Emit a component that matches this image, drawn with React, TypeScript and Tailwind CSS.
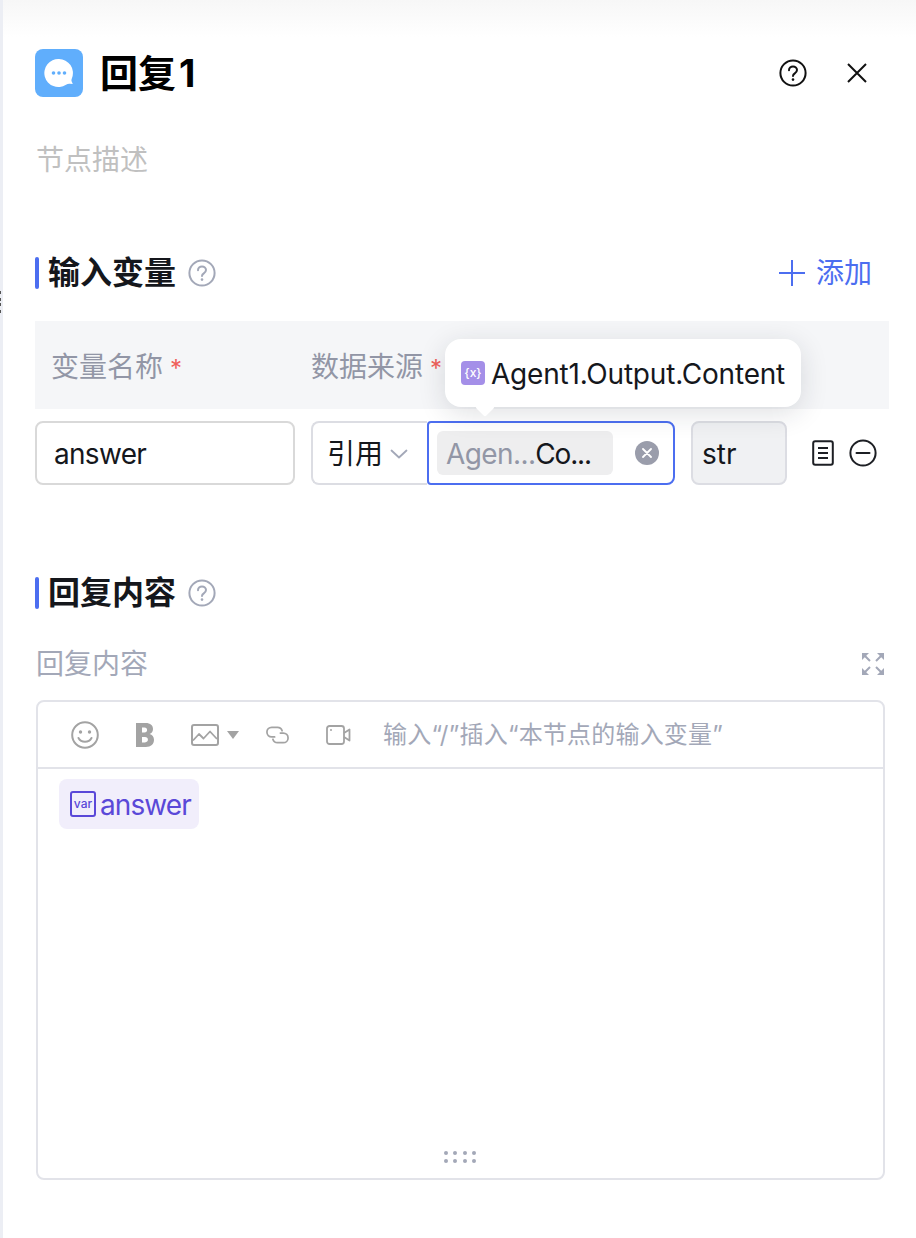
const cjk = "font-['Inter','Noto_Sans_CJK_SC',sans-serif]";

function HelpIcon({ size = 28, color = "#a3a8b8", width = 2 }: { size?: number; color?: string; width?: number }) {
  return (
    <svg width={size} height={size} viewBox="0 0 28 28" fill="none">
      <circle cx="14" cy="14" r="12.6" stroke={color} strokeWidth={width} />
      <path d="M10 11.2c0-2.3 1.8-3.8 4-3.8s4 1.5 4 3.6c0 1.700-1 2.500-2.200 3.300-1.100.7-1.800 1.300-1.800 2.700" stroke={color} strokeWidth={width} strokeLinecap="round" />
      <circle cx="14" cy="20.600" r="1.300" fill={color} />
    </svg>
  );
}

function SectionTitle({ title }: { title: string }) {
  return (
    <div className="flex items-center h-8">
      <div className="w-1 h-8 rounded-sm bg-[#4c6ef0]" />
      <span className="ml-[9px] text-[32px] leading-8 font-semibold text-[#15171c]">{title}</span>
      <span className="ml-3 flex">
        <HelpIcon />
      </span>
    </div>
  );
}

function Tooltip() {
  return (
    <div className="absolute left-[410px] top-[-82px] z-10 flex h-[68px] w-[356px] items-center rounded-2xl bg-white pl-4 shadow-[0_6px_28px_rgba(30,35,50,0.14)]">
      <span className="flex h-6 w-6 shrink-0 items-center justify-center rounded-[4px] bg-[#a48fe8] text-[12px] font-medium text-white">{"{x}"}</span>
      <span className="ml-[6px] whitespace-nowrap pt-px text-[28px] leading-8 tracking-[-0.2px] text-[#15171c]">Agent1.Output.Content</span>
      <span className="absolute left-[33px] top-[61px] h-[14px] w-[14px] rotate-45 rounded-[2px] bg-white" />
    </div>
  );
}

function VariableRow() {
  return (
    <div className="relative mt-3 flex h-16 items-stretch">
      <Tooltip />
      <div className="flex w-[260px] items-center rounded-lg border-2 border-[#d9d9d9] pl-[17px] pt-px text-[28px] tracking-[-0.7px] text-[#15171c]">answer</div>
      <div className="ml-4 flex w-[116px] items-center rounded-l-lg border-2 border-r-0 border-[#dcdde3] pl-[14px] pt-px text-[28px] text-[#15171c]">
        引用
        <svg className="ml-[7px]" width="18" height="10" viewBox="0 0 18 10" fill="none">
          <path d="M1.500 1.500 9 8.500l7.500-7" stroke="#a3a8b8" strokeWidth="1.800" strokeLinecap="round" strokeLinejoin="round" />
        </svg>
      </div>
      <div className="flex w-[248px] items-center rounded-r-lg rounded-l-sm border-2 border-[#4c6ef0] pl-2 pr-[14px]">
        <div className="flex h-11 w-[176px] items-center whitespace-nowrap rounded-md bg-[#eeeeef] pl-[9px] pt-px text-[28px] tracking-[-0.6px]">
          <span className="text-[#9296a6]">Agen...</span>
          <span className="tracking-[-1.2px] text-[#15171c]">Co...</span>
        </div>
        <span className="ml-auto flex h-6 w-6 items-center justify-center rounded-full bg-[#9a9dab]">
          <svg width="10" height="10" viewBox="0 0 10 10" fill="none">
            <path d="M1 1l8 8M9 1 1 9" stroke="#fff" strokeWidth="1.800" strokeLinecap="round" />
          </svg>
        </span>
      </div>
      <div className="ml-4 flex w-24 items-center rounded-lg border-2 border-[#dcdde3] bg-[#f0f1f3] pl-[9px] pt-px text-[28px] text-[#15171c]">str</div>
      <div className="ml-[25px] flex items-center">
        <svg width="22" height="26" viewBox="0 0 22 26" fill="none">
          <rect x="1.200" y="1.200" width="19.600" height="23.600" rx="2" stroke="#1d1f24" strokeWidth="2" />
          <path d="M6 8h10M6 13h10M6 18h10" stroke="#1d1f24" strokeWidth="2" />
        </svg>
        <svg className="ml-[15px]" width="28" height="28" viewBox="0 0 28 28" fill="none">
          <circle cx="14" cy="14" r="12.600" stroke="#1d1f24" strokeWidth="2" />
          <path d="M7.500 14h13" stroke="#1d1f24" strokeWidth="2" strokeLinecap="round" />
        </svg>
      </div>
    </div>
  );
}

function Toolbar() {
  const c = "#a3a3a3";
  return (
    <div className="flex h-[67px] shrink-0 items-center border-b-2 border-[#e2e3e9] pl-[33px]">
      <svg width="28" height="28" viewBox="0 0 28 28" fill="none">
        <circle cx="14" cy="14" r="12.800" stroke={c} strokeWidth="2" />
        <circle cx="9.500" cy="11" r="1.700" fill={c} />
        <circle cx="18.500" cy="11" r="1.700" fill={c} />
        <path d="M7.500 17c1.400 2.600 3.800 3.800 6.500 3.800s5.100-1.200 6.500-3.800" stroke={c} strokeWidth="2" strokeLinecap="round" />
      </svg>
      <svg className="ml-[37px]" width="18" height="24" viewBox="0 0 18 24" fill={c}>
        <path fillRule="evenodd" d="M0 0h9.500C14.500 0 17 2.400 17 6c0 2.500-1.300 4.300-3.400 5.100C16.200 11.800 18 13.800 18 16.800 18 21.200 15 24 9.800 24H0V0Zm6 4.600v5h2.500c1.700 0 2.600-.9 2.600-2.500s-.9-2.500-2.600-2.500H6Zm0 9.300v5.500h3c1.900 0 2.900-1 2.900-2.800s-1-2.700-2.900-2.700H6Z" />
      </svg>
      <svg className="ml-[37px]" width="28" height="22" viewBox="0 0 28 22" fill="none">
        <rect x="1" y="1" width="26" height="20" rx="2" stroke={c} strokeWidth="2" />
        <path d="M2 16.500 8 10l4.500 4.500L19 7.500l7 7.500" stroke={c} strokeWidth="1.800" strokeLinejoin="round" />
      </svg>
      <svg className="ml-[8px]" width="12" height="8" viewBox="0 0 12 8" fill={c}>
        <path d="M0 0h12L6 8z" />
      </svg>
      <svg className="ml-[26px]" width="25" height="18" viewBox="0 0 26 18" fill="none">
        <path d="M10 11H7a5 5 0 0 1 0-10h6a5 5 0 0 1 4.800 3.600" stroke={c} strokeWidth="1.800" strokeLinecap="round" />
        <path d="M16 7h3a5 5 0 0 1 0 10h-6a5 5 0 0 1-4.800-3.600" stroke={c} strokeWidth="1.800" strokeLinecap="round" />
      </svg>
      <svg className="ml-[36px]" width="25" height="20" viewBox="0 0 25 20" fill="none">
        <rect x="1" y="1" width="17" height="18" rx="2.500" stroke={c} strokeWidth="1.800" />
        <path d="m18 8 5.500-3.500v11L18 12" stroke={c} strokeWidth="1.800" strokeLinejoin="round" />
        <circle cx="5" cy="5" r="1" fill={c} />
      </svg>
      <span className="ml-8 whitespace-nowrap text-[24px] leading-8 tracking-[0.2px] text-[#a3a8b8]">输入“/”插入“本节点的输入变量”</span>
    </div>
  );
}

function Editor() {
  return (
    <div className="relative ml-px mt-4 flex h-[480px] w-[849px] flex-col rounded-lg border-2 border-[#e2e3e9]">
      <Toolbar />
      <div className="pl-[21px] pt-[10px]">
        <div className="inline-flex h-[50px] w-[140px] items-center rounded-lg bg-[#f1eefb] pl-[11px] text-[28px] tracking-[-0.9px] text-[#5a48d8]">
          <span className="flex h-[26px] w-[26px] items-center justify-center rounded-[3px] border-2 border-[#5a48d8] text-[12px] font-medium tracking-normal">var</span>
          <span className="ml-1 pt-px">answer</span>
        </div>
      </div>
      <div className="mb-[15px] ml-[406px] mt-auto grid w-8 grid-cols-4 gap-x-[5.5px] gap-y-1">
        {Array.from({ length: 8 }).map((_, i) => (
          <span key={i} className="h-1 w-1 rounded-full bg-[#a3a8b8]" />
        ))}
      </div>
    </div>
  );
}

export default function App() {
  return (
    <div className={`${cjk} flex h-[1238px] w-[916px] overflow-hidden bg-white`}>
      {/* Edge of the canvas behind the panel */}
      <div className="flex w-[3px] shrink-0 flex-col bg-[#eceef4] pt-[291px]">
        <span className="h-[3px] w-px bg-[#555]" />
        <span className="mt-1 h-[3px] w-px bg-[#555]" />
        <span className="mt-[2px] h-[3px] w-px bg-[#555]" />
        <span className="mt-1 h-[3px] w-px bg-[#555]" />
      </div>
      <div className="flex-1 bg-gradient-to-b from-[#f7f7f7] via-white via-[3%] to-white pl-8 pr-[27px] pt-[49px]">
        {/* Header */}
        <div className="flex h-12 items-center">
          <span className="flex h-12 w-12 items-center justify-center rounded-lg bg-[#60aefc]">
            <svg width="30" height="30" viewBox="0 0 30 30">
              <path d="M15 1a14 14 0 0 1 13 19c-.6 1.500-.8 2.600-.2 3.800l1 2.200-3-.2c-1.500-.1-2.600.2-3.800.9A14 14 0 1 1 15 1Z" fill="#fff" />
              <circle cx="9.500" cy="15" r="1.800" fill="#60aefc" />
              <circle cx="15" cy="15" r="1.800" fill="#60aefc" />
              <circle cx="20.500" cy="15" r="1.800" fill="#60aefc" />
            </svg>
          </span>
          <span className="ml-[17px] text-[38px] font-bold leading-none text-black">
            回复<span className="ml-[3px]">1</span>
          </span>
          <span className="ml-auto flex">
            <HelpIcon color="#111" />
          </span>
          <svg className="ml-10 mr-[22px]" width="20" height="20" viewBox="0 0 20 20" fill="none">
            <path d="M1 1l18 18M19 1 1 19" stroke="#111" strokeWidth="2" />
          </svg>
        </div>
        <div className="ml-px mt-[45px] text-[28px] leading-9 text-[#c0c0c0]">节点描述</div>

        {/* Input variables */}
        <div className="mt-[79px] flex items-center justify-between">
          <SectionTitle title="输入变量" />
          <div className="mr-[17px] flex items-center text-[28px] leading-8 text-[#4c6ef0]">
            <svg width="28" height="28" viewBox="0 0 28 28" fill="none">
              <path d="M14 1v26M1 14h26" stroke="#4c6ef0" strokeWidth="2" />
            </svg>
            <span className="ml-[10px]">添加</span>
          </div>
        </div>
        <div className="mt-8 flex h-[88px] items-center bg-[#f5f6f8] pl-4 pt-[3px] text-[28px] text-[#9296a6]">
          <span className="w-[260px]">
            变量名称<span className="ml-[7px] text-[24px] text-[#f0605a]">*</span>
          </span>
          <span>
            数据来源<span className="ml-[7px] text-[24px] text-[#f0605a]">*</span>
          </span>
        </div>
        <VariableRow />

        {/* Reply content */}
        <div className="mt-[92px]">
          <SectionTitle title="回复内容" />
        </div>
        <div className="ml-px mr-[4px] mt-[35px] flex h-10 items-center justify-between text-[28px] text-[#a3a8b8]">
          回复内容
          <svg width="24" height="24" viewBox="0 0 24 24" fill="#a3a8b8">
            <path d="M1 1h7L1 8z" />
            <path d="M23 1h-7l7 7z" />
            <path d="M1 23h7l-7-7z" />
            <path d="M23 23h-7l7-7z" />
            <path d="m3 3 6 6M21 3l-6 6M3 21l6-6M21 21l-6-6" stroke="#a3a8b8" strokeWidth="2" fill="none" />
          </svg>
        </div>
        <Editor />
      </div>
    </div>
  );
}
